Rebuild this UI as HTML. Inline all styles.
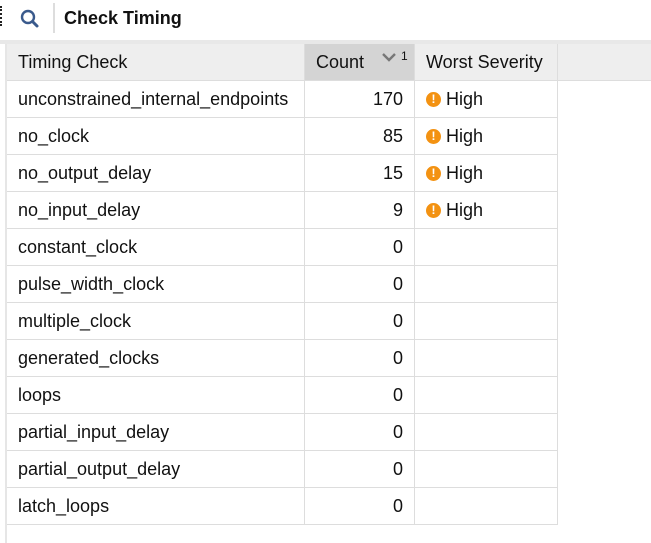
<!DOCTYPE html>
<html><head><style>
body{margin:0;width:651px;height:543px;background:#fff;font-family:"Liberation Sans",sans-serif;position:relative;overflow:hidden}
.top{position:absolute;left:0;top:0;width:651px;height:40px;background:#fff}
.bar{position:absolute;left:0;top:40px;width:651px;height:4px;background:#e8e8e8}
.lb{position:absolute;left:5px;top:44px;width:2px;height:499px;background:#e6e6e6}
table{position:absolute;left:7px;top:44px;border-collapse:collapse;font-size:18px;color:#111;table-layout:fixed}
td,th{height:36px;padding:0 11px;border-right:1px solid #ddd;border-bottom:1px solid #ddd;font-weight:normal;text-align:left;white-space:nowrap;overflow:visible}
th{background:#eeeeee}
.c1{width:275px}.c2{width:87px;text-align:right}.c3{width:120px}
th.c2{background:#d4d4d4;text-align:left;position:relative}
.ic{display:inline-block;width:15px;height:15px;border-radius:50%;background:#f39212;color:#fff;font-size:12px;font-weight:bold;text-align:center;line-height:15px;vertical-align:top;position:relative;top:3px;margin-right:5px}
</style></head><body>
<div class="top">
<div style="position:absolute;left:0;top:6px;width:3px;height:20px;border-left:2px dotted #222"></div>
<svg style="position:absolute;left:20px;top:9px" width="20" height="20" viewBox="0 0 20 20"><circle cx="8" cy="8" r="6" fill="none" stroke="#3a5a8c" stroke-width="2.4"/><line x1="12.5" y1="12.5" x2="17" y2="17" stroke="#3a5a8c" stroke-width="3" stroke-linecap="round"/></svg>
<div style="position:absolute;left:53px;top:3px;width:2px;height:30px;background:#ddd"></div>
<div style="position:absolute;left:64px;top:8px;font-size:18px;font-weight:bold;color:#111">Check Timing</div>
</div>
<div class="bar"></div><div class="lb"></div>
<div style="position:absolute;left:557px;top:44px;width:94px;height:36px;background:#eeeeee;border-bottom:1px solid #ddd"></div>
<table>
<tr><th class="c1">Timing Check</th><th class="c2">Count<svg style="position:absolute;left:77px;top:9px" width="14" height="9" viewBox="0 0 14 9"><path d="M1 1L7 7L13 1" fill="none" stroke="#777" stroke-width="2.4"/></svg><span style="position:absolute;left:96px;top:5px;font-size:12px">1</span></th><th class="c3">Worst Severity</th></tr>
<tr><td class="c1">unconstrained_internal_endpoints</td><td class="c2">170</td><td class="c3"><span class="ic">!</span>High</td></tr>
<tr><td class="c1">no_clock</td><td class="c2">85</td><td class="c3"><span class="ic">!</span>High</td></tr>
<tr><td class="c1">no_output_delay</td><td class="c2">15</td><td class="c3"><span class="ic">!</span>High</td></tr>
<tr><td class="c1">no_input_delay</td><td class="c2">9</td><td class="c3"><span class="ic">!</span>High</td></tr>
<tr><td class="c1">constant_clock</td><td class="c2">0</td><td class="c3"></td></tr>
<tr><td class="c1">pulse_width_clock</td><td class="c2">0</td><td class="c3"></td></tr>
<tr><td class="c1">multiple_clock</td><td class="c2">0</td><td class="c3"></td></tr>
<tr><td class="c1">generated_clocks</td><td class="c2">0</td><td class="c3"></td></tr>
<tr><td class="c1">loops</td><td class="c2">0</td><td class="c3"></td></tr>
<tr><td class="c1">partial_input_delay</td><td class="c2">0</td><td class="c3"></td></tr>
<tr><td class="c1">partial_output_delay</td><td class="c2">0</td><td class="c3"></td></tr>
<tr><td class="c1">latch_loops</td><td class="c2">0</td><td class="c3"></td></tr>
</table>
</body></html>
